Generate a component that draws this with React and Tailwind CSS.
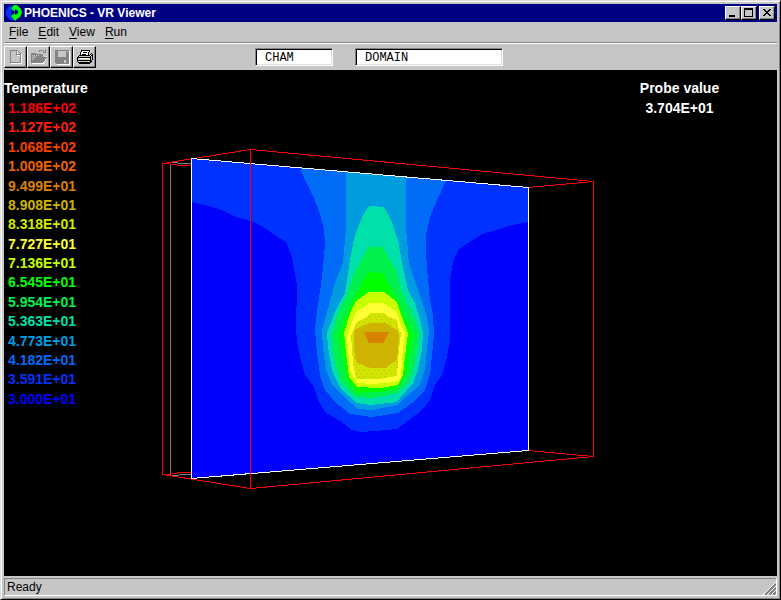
const MENUS = ['File', 'Edit', 'View', 'Run'];

const LEGEND = [
  { value: '1.186E+02', color: 'text-[#ff0000]' },
  { value: '1.127E+02', color: 'text-[#ff2000]' },
  { value: '1.068E+02', color: 'text-[#f84000]' },
  { value: '1.009E+02', color: 'text-[#ee6400]' },
  { value: '9.499E+01', color: 'text-[#d98200]' },
  { value: '8.908E+01', color: 'text-[#ceb400]' },
  { value: '8.318E+01', color: 'text-[#d0ea00]' },
  { value: '7.727E+01', color: 'text-[#ffff33]' },
  { value: '7.136E+01', color: 'text-[#c8ff00]' },
  { value: '6.545E+01', color: 'text-[#00ff00]' },
  { value: '5.954E+01', color: 'text-[#00f04c]' },
  { value: '5.363E+01', color: 'text-[#00e0aa]' },
  { value: '4.773E+01', color: 'text-[#009ce0]' },
  { value: '4.182E+01', color: 'text-[#006cf8]' },
  { value: '3.591E+01', color: 'text-[#0032ff]' },
  { value: '3.000E+01', color: 'text-[#0000ff]' },
];

// temperature bands, coldest first
const BANDS = [
  {
    fill: '#0032ff',
    points:
      '192,159 192,202 205,205 222,210 236,217 250,221 256,223 268,230 276,236 286,242 292,257 295,275 297,284 296,330 297,340 300,357 305,375 314,387 318,400 325,412 340,421 352,430 360,432 376,431 397,429 408,421 422,410 430,400 435,385 442,375 447,357 450,340 450,280 453,262 458,250 465,245 482,234 500,229 508,226 528,222 528,187',
  },
  {
    fill: '#006cf8',
    points:
      '300,168 306,182 314,198 320,214 324,229 325,245 323,267 321,285 317,310 315,330 317,353 320,375 325,390 335,402 350,414 372,417 398,413 412,403 425,390 430,375 432,355 434,335 433,315 430,300 428,280 426,255 426,235 430,217 437,200 446,181',
  },
  {
    fill: '#009ce0',
    points:
      '346,172 346,230 343,263 335,283 329,305 322,330 323,350 326,370 332,385 345,398 358,409 372,410 397,405 407,396 420,385 425,370 427,350 429,330 426,313 417,287 409,263 407,240 406,228 406,177',
  },
  {
    fill: '#00e0aa',
    points:
      '369,206 384,207 392,222 398,240 402,263 408,290 415,303 420,320 423,333 422,350 418,370 413,383 400,398 397,402 370,405 357,403 340,388 332,370 328,347 327,333 335,312 345,293 350,260 355,235 363,215',
  },
  {
    fill: '#00f04c',
    points:
      '369,247 383,247 390,260 397,272 400,287 407,303 415,320 419,333 417,353 413,370 408,382 398,393 372,398 355,397 340,380 334,357 332,335 338,313 348,293 355,272 363,257',
  },
  {
    fill: '#00ff00',
    points:
      '369,272 383,273 390,287 398,300 405,317 414,335 410,353 407,372 397,388 390,391 357,393 347,380 342,353 338,335 345,317 353,300 363,281',
  },
  {
    fill: '#c8ff00',
    points:
      '369,292 384,292 397,302 402,317 408,333 405,357 403,375 398,385 380,388 357,387 349,377 346,353 344,333 350,313 356,301',
  },
  {
    fill: '#ffff33',
    points:
      '370,303 383,303 397,312 400,323 405,333 402,360 401,377 397,382 373,384 357,383 350,370 347,337 350,327 356,312',
  },
  {
    fill: '#d0e600',
    points:
      '370,313 384,313 387,316 397,320 399,330 401,333 398,360 397,376 380,379 356,379 353,363 351,335 357,322 367,317',
  },
  {
    fill: 'url(#dots)',
    points:
      '370,314 384,314 397,321 399,333 398,360 396,375 380,378 357,378 354,363 352,335 357,323',
  },
  {
    fill: '#ceb400',
    points:
      '354,330 362,326 370,323 385,323 398,330 399,337 397,360 385,368 370,368 356,362 354,347',
  },
  { fill: '#d98200', points: '364,332 389,332 388,334 385,340 383,343 369,343' },
];

const RAISED =
  'border border-t-white border-l-white border-r-black border-b-black shadow-[inset_-1px_-1px_0_#848484]';

function ToolButton({ label, disabled, children }) {
  return (
    <button
      type="button"
      aria-label={label}
      disabled={disabled}
      className={`flex h-[22px] w-[23px] items-center justify-center bg-[#c6c6c6] ${RAISED}`}
    >
      {children}
    </button>
  );
}

function WindowButton({ label, children }) {
  return (
    <button
      type="button"
      aria-label={label}
      className={`flex h-[14px] w-4 items-center justify-center bg-[#c6c6c6] ${RAISED}`}
    >
      <svg width="12" height="10" viewBox="0 0 12 10" shapeRendering="crispEdges">
        {children}
      </svg>
    </button>
  );
}

function NameField({ label, value, className }) {
  return (
    <input
      aria-label={label}
      defaultValue={value}
      className={`h-[18px] border border-t-[#848484] border-l-[#848484] border-r-white border-b-white bg-white pt-0.5 pl-[9px] font-['Liberation_Mono',monospace] text-[12px] leading-[14px] text-black shadow-[inset_1px_1px_0_#000,inset_-1px_-1px_0_#dedede] outline-none ${className}`}
    />
  );
}

function TitleBar() {
  return (
    <header className="flex h-[18px] items-center bg-[#000084] pr-0.5 pl-0.5">
      <svg width="16" height="16" viewBox="0 0 16 16" className="mr-0.5">
        <path d="M6 0L2 2L0 6v4l2 3l3 2h4l1-3H8L5 10V7l2-2L5 3z" fill="#0032ff" />
        <path d="M5 3L8 0h3l4 4l1 4l-2 4l-3 2l-2 2l-4-5l4-3v2l3-2V6L9 4v3z" fill="#00ff00" />
      </svg>
      <h1 className="flex-1 text-[12px] leading-[18px] font-bold text-white">PHOENICS - VR Viewer</h1>
      <div className="flex">
        <WindowButton label="Minimize">
          <path d="M2 7h6v2H2z" />
        </WindowButton>
        <WindowButton label="Maximize">
          <path d="M1 0h9v9H1zM2 2v6h7V2z" fillRule="evenodd" />
        </WindowButton>
      </div>
      <div className="ml-0.5">
        <WindowButton label="Close">
          <path d="M2 1h2v1h1v1h2V2h1V1h2v1H9v1H8v1H7v1h1v1h1v1h1v1H8V7H7V6H5v1H4v1H2V7h1V6h1V5h1V4H4V3H3V2H2z" />
        </WindowButton>
      </div>
    </header>
  );
}

function MenuBar() {
  return (
    <nav className="flex h-[20px] items-center text-[12px] leading-5">
      {MENUS.map((menu) => (
        <button key={menu} type="button" className="px-[5px] underline-offset-2 first-letter:underline">
          {menu}
        </button>
      ))}
    </nav>
  );
}

function Toolbar() {
  return (
    <div className="flex h-7 items-center border-t border-[#848484] shadow-[inset_0_1px_0_#fff]">
      <div className="flex w-[251px]">
        <ToolButton label="New" disabled>
          <svg width="16" height="16" viewBox="0 0 16 16" fill="none" shapeRendering="crispEdges">
            <path d="M3 14.500h10.500V5M9.500 2v4h3" stroke="#fff" />
            <path d="M2.500 1.500h7l3 3v9h-10zM8.500 1.500v4h4" stroke="#848484" />
          </svg>
        </ToolButton>
        <ToolButton label="Open" disabled>
          <svg width="18" height="16" viewBox="0 0 18 16" fill="none" shapeRendering="crispEdges">
            <path d="M2 14.500h11l4-7" stroke="#fff" />
            <path d="M1 4h4l1 1h7v3h4l-4 6H1z" fill="#848484" />
            <path d="M2 6h1v1H2zM4 6h1v1H4zM6 6h1v1H6zM8 6h1v1H8zM3 7h1v1H3zM5 7h1v1H5zM2 8h1v1H2zM4 8h1v1H4zM3 9h1v1H3zM2 10h1v1H2z" fill="#c6c6c6" />
            <path d="M9.500 3v-1.500h3l2 2M15.500 0v4M12.500 3.500h3" stroke="#848484" />
          </svg>
        </ToolButton>
        <ToolButton label="Save" disabled>
          <svg width="16" height="16" viewBox="0 0 16 16" shapeRendering="crispEdges">
            <path d="M2 2h14v14H3v-1H2z" fill="#fff" />
            <path d="M1 1h14v14H2l-1-1z" fill="#848484" />
            <path d="M4 2h8v6H4zM13 2h1v1h-1zM10 11h2v3h-2z" fill="#c6c6c6" />
          </svg>
        </ToolButton>
        <ToolButton label="Print">
          <svg width="18" height="16" viewBox="0 0 18 16" shapeRendering="crispEdges">
            <path d="M5.500 1.500h8l-2 6h-8z" fill="#fff" stroke="#000" />
            <path d="M7 3.500h4M6 5.500h4" stroke="#000" />
            <path d="M1.500 8.500l2-2h10l2-2 1 1v5l-3 4h-10l-2-2z" fill="#c6c6c6" stroke="#000" />
            <path d="M2 8.500h12M2 11.500h12M14.500 8v5M14 8l2-2M3 13.500h11" stroke="#000" />
            <path d="M4 9.500h9" stroke="#fff" />
            <path d="M9 10h3v1H9z" fill="#e8e800" />
          </svg>
        </ToolButton>
      </div>
      <NameField label="Case" value="CHAM" className="w-[78px]" />
      <NameField label="Object" value="DOMAIN" className="ml-[22px] w-[148px]" />
    </div>
  );
}

function Legend() {
  return (
    <section className="w-[156px] pt-[9px] text-[14px] leading-5 font-bold">
      <h2 className="leading-[19px] text-white">Temperature</h2>
      <ol className="flex h-[310px] flex-col pl-1">
        {LEGEND.map(({ value, color }) => (
          <li key={value} className={`min-h-0 flex-1 ${color}`}>
            {value}
          </li>
        ))}
      </ol>
    </section>
  );
}

function Probe() {
  return (
    <section className="flex flex-1 justify-center pt-[9px] text-center text-[14px] font-bold text-white">
      <div className="mr-[18px]">
        <h2 className="leading-[19px]">Probe value</h2>
        <p className="leading-5">3.704E+01</p>
      </div>
    </section>
  );
}

function Scene() {
  return (
    <svg
      role="img"
      aria-label="Temperature contours in the domain"
      width="440"
      height="430"
      viewBox="160 70 440 430"
      className="shrink-0"
      fill="none"
      shapeRendering="crispEdges"
    >
      <defs>
        <pattern id="dots" width="5" height="6" patternUnits="userSpaceOnUse">
          <path d="M1 1h1v1H1zM4 4h1v1H4z" fill="#ceb400" />
        </pattern>
        <clipPath id="slice">
          <path d="M192 159L528 187V450L192 478z" />
        </clipPath>
      </defs>

      {/* far side of the domain box */}
      <path d="M170.500 163.500V475M170 162.500h8M178 163.500h14M171 475.500h8M179 474.500h13" stroke="#808080" />
      <path
        d="M162.500 163.500V474.500M162.500 163.500L250.500 149.500L593.500 181.500M167 163.500L180 165.500H192M162.500 474.500L250.500 488.500L593.500 456.500M167 474.500L180 472.500H192M528 187.500L593.500 181.500V456.500L528 450.500"
        stroke="#ff0000"
      />

      <g clipPath="url(#slice)">
        <path d="M192 159L528 187V450L192 478z" fill="#0000ff" />
        {BANDS.map(({ fill, points }) => (
          <polygon key={fill} points={points} fill={fill} />
        ))}
      </g>

      <path d="M191.500 158.500L528.500 187.500V450.500L191.500 478.500z" stroke="#ffffff" />
      <path d="M250.500 149V489" stroke="#ff0000" />
    </svg>
  );
}

function StatusBar() {
  return (
    <footer className="pt-0.5">
      <div className="flex h-[18px] items-center border border-t-[#848484] border-l-[#848484] border-r-white border-b-white pl-0.5 text-[12px] leading-4">
        <span className="flex-1">Ready</span>
        <svg width="13" height="13" viewBox="0 0 13 13" className="self-end" shapeRendering="crispEdges">
          <path d="M0 13L13 0M4 13L13 4M8 13L13 8" stroke="#fff" />
          <path d="M2 13L13 2M6 13L13 6M10 13L13 10" stroke="#848484" strokeWidth="2" />
        </svg>
      </div>
    </footer>
  );
}

export default function App() {
  return (
    <div className="flex min-h-screen flex-col border border-t-[#dedede] border-r-black border-b-black border-l-[#dedede] bg-[#c6c6c6] p-[3px] font-['Liberation_Sans',Arial,sans-serif] text-black shadow-[inset_1px_1px_0_#fff,inset_-1px_-1px_0_#848484]">
      <TitleBar />
      <MenuBar />
      <Toolbar />
      <main className="flex flex-1 bg-black">
        <Legend />
        <Scene />
        <Probe />
      </main>
      <StatusBar />
    </div>
  );
}
